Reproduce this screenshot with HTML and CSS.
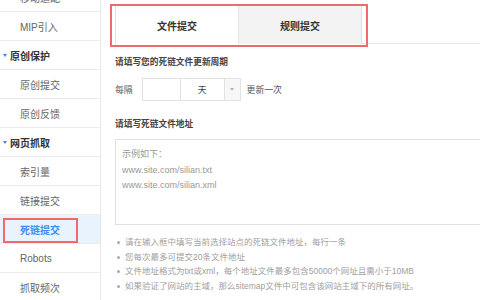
FILE: index.html
```html
<!DOCTYPE html>
<html lang="zh">
<head>
<meta charset="utf-8">
<link rel="stylesheet" href="styles.css">
</head>
<body>
<div class="page">
  <aside class="side">
    <ul class="nav">
      <li class="item sub">移动适配</li>
      <li class="item sub">MIP引入</li>
      <li class="item head"><span class="caret"></span>原创保护</li>
      <li class="item sub">原创提交</li>
      <li class="item sub">原创反馈</li>
      <li class="item head"><span class="caret"></span>网页抓取</li>
      <li class="item sub">索引量</li>
      <li class="item sub">链接提交</li>
      <li class="item sub active">死链提交<span class="mark mark-nav"></span></li>
      <li class="item sub">Robots</li>
      <li class="item sub">抓取频次</li>
    </ul>
  </aside>
  <main class="main">
    <div class="tabs">
      <div class="tab on">文件提交</div>
      <div class="tab off">规则提交</div>
      <span class="mark mark-tabs"></span>
    </div>
    <h3 class="title t1">请填写您的死链文件更新周期</h3>
    <div class="period">
      <span class="lbl">每隔</span>
      <span class="num"></span>
      <span class="unit">天</span>
      <span class="arrow"><span class="tri"></span></span>
      <span class="lbl after">更新一次</span>
    </div>
    <h3 class="title t2">请填写死链文件地址</h3>
    <div class="area">
      <p>示例如下：</p>
      <p>www.site.com/silian.txt</p>
      <p>www.site.com/silian.xml</p>
    </div>
    <ul class="tips">
      <li>请在输入框中填写当前选择站点的死链文件地址，每行一条</li>
      <li>您每次最多可提交20条文件地址</li>
      <li>文件地址格式为txt或xml，每个地址文件最多包含50000个网址且需小于10MB</li>
      <li>如果验证了网站的主域，那么sitemap文件中可包含该网站主域下的所有网址。</li>
    </ul>
  </main>
</div>
</body>
</html>
```

FILE: styles.css
```css
* { box-sizing: border-box; }
html, body { margin: 0; padding: 0; background: #fff; }
body {
  width: 480px;
  height: 300px;
  overflow: hidden;
  font-family: "Liberation Sans", "Noto Sans CJK SC", sans-serif;
}
.page {
  display: flex;
  height: 300px;
}
.side {
  width: 101px;
  flex: none;
  border-right: 1px solid #e8e8e8;
  overflow: hidden;
}
.nav {
  list-style: none;
  margin: -17px 0 0 0;
  padding: 0;
}
.item {
  position: relative;
  height: 29px;
  border-bottom: 1px solid #ececec;
  display: flex;
  align-items: center;
  font-size: 10px;
  color: #666;
}
.sub { padding-left: 20px; }
.head {
  padding-left: 3px;
  color: #333;
  font-weight: 700;
}
.caret {
  width: 0;
  height: 0;
  border-left: 2.5px solid transparent;
  border-right: 2.5px solid transparent;
  border-top: 3px solid #3a86ef;
  margin-right: 3px;
}
.active {
  background: #e9f3fd;
  color: #3d8cf0;
  font-weight: 700;
}
.mark {
  position: absolute;
  border: 2px solid #f06a6c;
  pointer-events: none;
}
.mark-nav {
  left: 3px;
  top: 3px;
  width: 75px;
  height: 25px;
}
.main {
  flex: 1;
  padding-left: 14px;
  min-width: 0;
}
.tabs {
  position: relative;
  display: flex;
  margin-top: 5px;
  height: 39px;
  border-bottom: 1px solid #e6e6e6;
}
.tab {
  height: 39px;
  display: flex;
  align-items: center;
  justify-content: center;
  font-size: 10px;
  font-weight: 700;
  color: #333;
  border-top: 1px solid #e6e6e6;
}
.tab.on {
  width: 123px;
  background: #fff;
  border-left: 1px solid #e0e0e0;
  border-bottom: 1px solid #fff;
  margin-bottom: -1px;
  height: 40px;
}
.tab.off {
  width: 124px;
  background: #f3f3f3;
  border-right: 1px solid #e0e0e0;
  border-left: 1px solid #e6e6e6;
}
.mark-tabs {
  left: -5px;
  top: -1px;
  width: 258px;
  height: 43px;
}
.title {
  margin: 0;
  font-size: 8.7px;
  line-height: 14px;
  font-weight: 700;
  color: #444;
}
.t1 { margin-top: 11px; }
.t2 { margin-top: 16px; }
.period {
  display: flex;
  align-items: center;
  margin-top: 9px;
  height: 23px;
  font-size: 8.8px;
  color: #555;
}
.lbl.after { margin-left: 6px; }
.num {
  margin-left: 9px;
  width: 39px;
  height: 23px;
  border: 1px solid #e2e2e2;
}
.unit {
  width: 43px;
  height: 23px;
  border-top: 1px solid #e2e2e2;
  border-bottom: 1px solid #e2e2e2;
  display: flex;
  align-items: center;
  justify-content: center;
  color: #444;
}
.arrow {
  width: 17px;
  height: 23px;
  border: 1px solid #e2e2e2;
  background: #f7f7f7;
  display: flex;
  align-items: center;
  justify-content: center;
}
.tri {
  width: 0;
  height: 0;
  border-left: 2.5px solid transparent;
  border-right: 2.5px solid transparent;
  border-top: 3px solid #b0b0b0;
}
.area {
  margin-top: 8px;
  width: 420px;
  height: 86px;
  border: 1px solid #e0e0e0;
  padding: 7px 0 0 6px;
  font-size: 9px;
  line-height: 15.5px;
  color: #999;
}
.area p { margin: 0; }
.tips {
  list-style: none;
  margin: 10px 0 0 0;
  padding: 0 0 0 10px;
  font-size: 8.5px;
  line-height: 14.5px;
  color: #a0a0a0;
}
.tips li { position: relative; white-space: nowrap; }
.tips li::before {
  content: "";
  position: absolute;
  left: -8px;
  top: 6px;
  width: 3px;
  height: 3px;
  border-radius: 50%;
  background: #aaa;
}
```
